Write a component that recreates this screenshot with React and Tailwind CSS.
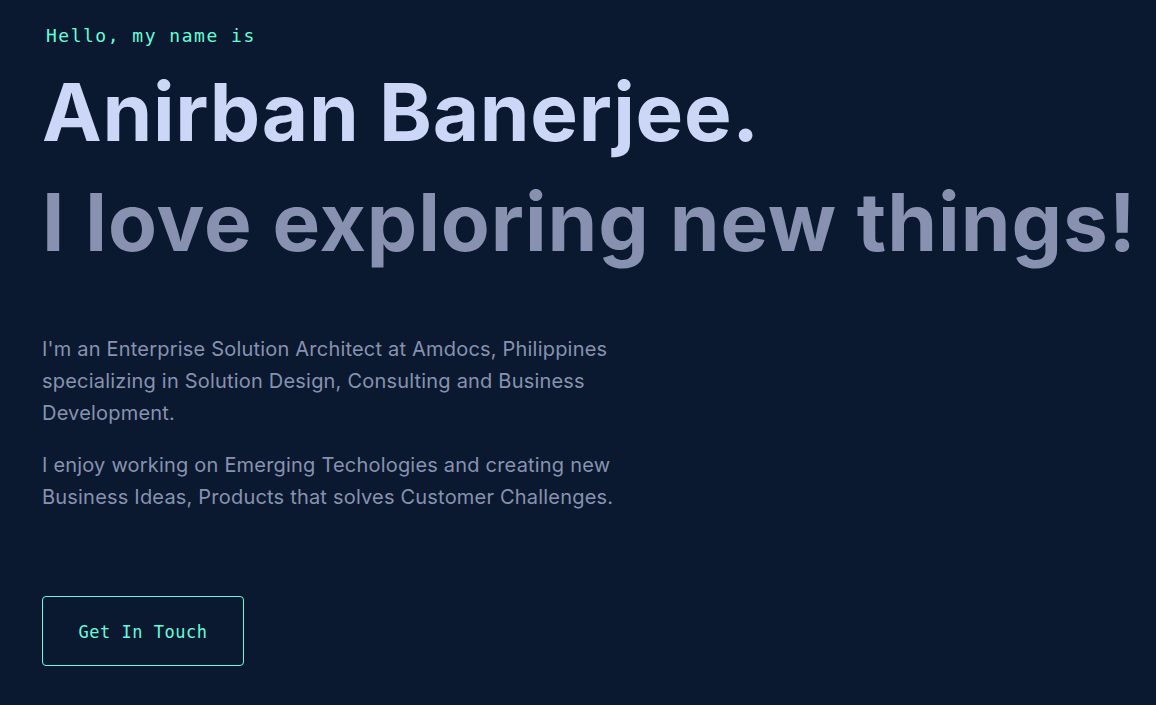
import React from 'react';

const mono = { fontFamily: '"DejaVu Sans Mono", "Liberation Mono", monospace' };

const App = () => {
  return (
    <div className="min-h-screen w-full bg-[#0a192f] overflow-hidden" style={{ fontFamily: 'Inter, "Noto Sans", sans-serif' }}>
      <section className="pl-[42px] pt-[22px]">
        {/* Intro line */}
        <p className="pl-[4px] text-[18px] leading-[28px] tracking-[1.5px] text-[#64ffda]" style={mono}>
          Hello, my name is
        </p>

        {/* Big headings */}
        <h1 className="mt-[7px] text-[80px] leading-[110px] font-bold tracking-[0.7px] text-[#ccd6f6] whitespace-nowrap">
          Anirban Banerjee.
        </h1>
        <h2 className="text-[80px] leading-[110px] font-bold tracking-[0.95px] text-[#8892b0] whitespace-nowrap">
          I love exploring new things!
        </h2>

        {/* About text */}
        <div className="mt-[56px] text-[20px] leading-[32px] tracking-[0.2px] text-[#8892b0]">
          <p>
            I'm an Enterprise Solution Architect at Amdocs, Philippines
            <br />
            specializing in Solution Design, Consulting and Business
            <br />
            Development.
          </p>
          <p className="mt-[20px]">
            I enjoy working on Emerging Techologies and creating new
            <br />
            Business Ideas, Products that solves Customer Challenges.
          </p>
        </div>

        <button
          className="mt-[83px] w-[202px] h-[70px] pt-[3px] border border-[#64ffda] rounded-[4px] text-[17px] tracking-[0.5px] text-[#64ffda]"
          style={mono}
        >
          Get In Touch
        </button>
      </section>
    </div>
  );
};

export default App;
